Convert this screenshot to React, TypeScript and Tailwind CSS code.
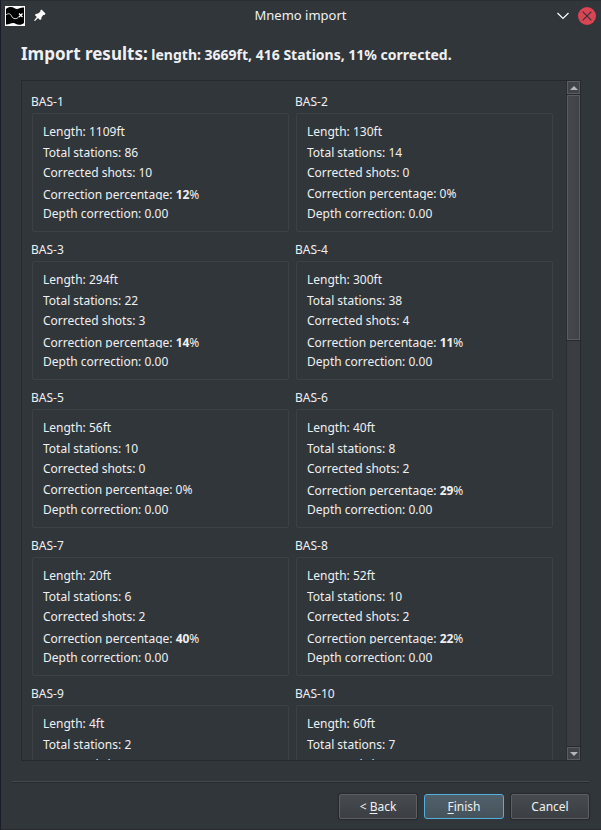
type Survey = {
  name: string;
  length: number;
  stations: number;
  corrected: number;
  percentage: number;
};

const surveys: Survey[] = [
  { name: 'BAS-1', length: 1109, stations: 86, corrected: 10, percentage: 12 },
  { name: 'BAS-2', length: 130, stations: 14, corrected: 0, percentage: 0 },
  { name: 'BAS-3', length: 294, stations: 22, corrected: 3, percentage: 14 },
  { name: 'BAS-4', length: 300, stations: 38, corrected: 4, percentage: 11 },
  { name: 'BAS-5', length: 56, stations: 10, corrected: 0, percentage: 0 },
  { name: 'BAS-6', length: 40, stations: 8, corrected: 2, percentage: 29 },
  { name: 'BAS-7', length: 20, stations: 6, corrected: 2, percentage: 40 },
  { name: 'BAS-8', length: 52, stations: 10, corrected: 2, percentage: 22 },
  { name: 'BAS-9', length: 4, stations: 2, corrected: 0, percentage: 0 },
  { name: 'BAS-10', length: 60, stations: 7, corrected: 0, percentage: 0 },
];

function SurveyGroup({ survey }: { survey: Survey }) {
  const { name, length, stations, corrected, percentage } = survey;
  return (
    <section>
      <h2 className="h-[22px] leading-[22px]">{name}</h2>
      <div className="ml-px grid grid-rows-[21px_20px_20px_21px_20px] rounded-xs border border-[#3d4146] px-2.5 pt-2 pb-[7px] leading-5">
        <p>Length: {length}ft</p>
        <p>Total stations: {stations}</p>
        <p>Corrected shots: {corrected}</p>
        {percentage > 0 ? (
          <p className="h-[17px] overflow-hidden leading-6">
            Correction percentage: <b>{percentage}</b>%
          </p>
        ) : (
          <p className="h-[17px] overflow-hidden leading-[22px]">Correction percentage: 0%</p>
        )}
        <p>Depth correction: 0.00</p>
      </div>
    </section>
  );
}

function TitleBar() {
  return (
    <header className="grid h-[30px] grid-cols-[1fr_auto_1fr] items-center border-t border-[#2a2e32] pr-[5px] pl-1">
      <div className="flex items-center gap-[7px]">
        <svg className="size-5" viewBox="0 0 20 20" aria-hidden="true">
          <rect width="20" height="20" fill="#fcfcfc" />
          <path d="M1 3C4 .5 7 .5 10 2.500C13 4 15 1 19 1.500V17C16 19.500 13 19 10 17.500C7 16 4 19 1 18.500Z" fill="#000" />
          <path d="M1 9C3 7 5.500 7.500 6.500 10C8 13.500 12 13.500 14 10.500" fill="none" stroke="#d8d8d8" strokeWidth="1" />
          <path d="m14 7.500 3.500 3.500m0-3.500L14 11" stroke="#fff" strokeWidth="1.300" />
        </svg>
        <button type="button" aria-label="Keep above others" className="size-4">
          <svg className="size-4" viewBox="0 0 16 16" fill="#fcfcfc" aria-hidden="true">
            <path d="M9.500 1.500 13.500 5.500 12.500 7H11.300L9.500 9.200 9.300 11.300 8 12 6 10 3 13 2 12.500 4.800 9 3 7.200 3.600 5.900 6 5.600 8.300 3.700 8.300 2.600Z" />
          </svg>
        </button>
      </div>
      <h1 className="text-[13px]">Mnemo import</h1>
      <div className="flex items-center justify-end gap-[7px]">
        <button type="button" aria-label="Minimize" className="size-4">
          <svg className="size-4" viewBox="0 0 16 16" fill="none" stroke="#fcfcfc" strokeWidth="1.200" aria-hidden="true">
            <path d="m2.500 5 5.500 5.500L13.500 5" />
          </svg>
        </button>
        <button type="button" aria-label="Close" className="size-[18px]">
          <svg className="size-[18px]" viewBox="0 0 18 18" aria-hidden="true">
            <circle cx="9" cy="9" r="9" fill="#da4453" />
            <path d="m4.700 4.700 8.600 8.600m0-8.600-8.600 8.600" stroke="#31363b" strokeWidth="1.200" />
          </svg>
        </button>
      </div>
    </header>
  );
}

function ScrollBar() {
  return (
    <div className="flex w-[14px] flex-col border-l border-[#2a2d31] bg-[#3a3d41]">
      <button type="button" aria-label="Scroll up" className="flex h-[13px] items-center justify-center border border-[#5a5d61] bg-[#404347]">
        <svg className="h-1 w-2" viewBox="0 0 8 4" fill="#b4b7b9" aria-hidden="true">
          <path d="M0 4 4 0l4 4Z" />
        </svg>
      </button>
      <div className="flex flex-1 flex-col border-y border-[#26292d]">
        <div className="h-[245px] border border-[#5a5d61] bg-linear-to-r from-[#45484c] to-[#3f4246]" />
        <div className="h-px bg-[#26292d]" />
      </div>
      <button type="button" aria-label="Scroll down" className="flex h-[13px] items-center justify-center border border-[#5a5d61] bg-[#404347]">
        <svg className="h-1 w-2" viewBox="0 0 8 4" fill="#b4b7b9" aria-hidden="true">
          <path d="M0 0h8L4 4Z" />
        </svg>
      </button>
    </div>
  );
}

const buttonBase = 'h-[25px] border text-center leading-6';
const plainButton = 'w-[78px] rounded-xs border-[#5c6063] bg-linear-to-b from-[#474b4f] to-[#3b3f43] shadow-[0_0_1px_1px_#26292d]';

export default function App() {
  return (
    <main className="flex h-screen flex-col overflow-hidden border-b border-l border-b-[#26292d] border-l-[#1a1d28] bg-[#31363b] font-['Noto_Sans',sans-serif] text-[12px] text-[#eff0f1]">
      <TitleBar />
      <p className="mt-2.5 ml-5 h-10 text-[14px] leading-7 font-bold">
        <span className="text-[17px]">Import results:</span> length: 3669ft, 416 Stations, 11% corrected.
      </p>
      <div className="mr-5 ml-5 flex min-h-0 flex-1 border border-[#26292d]">
        <div className="flex-1 overflow-y-auto [scrollbar-width:none]">
          <div className="grid grid-cols-2 gap-x-1.5 gap-y-[7px] pt-2.5 pr-[13px] pb-2.5 pl-[9px]">
            {surveys.map((survey) => (
              <SurveyGroup key={survey.name} survey={survey} />
            ))}
          </div>
        </div>
        <ScrollBar />
      </div>
      <hr className="mt-5 mr-3 ml-[11px] h-0.5 border-t border-b border-t-[#46494d] border-b-[#26292d]" />
      <footer className="flex justify-end gap-[7px] pt-[11px] pr-3 pb-2.5">
        <button type="button" className={`${buttonBase} ${plainButton}`}>
          &lt; <u className="underline-offset-2">B</u>ack
        </button>
        <button type="button" className={`w-20 rounded-[3px] ${buttonBase} border-[#55aee0] bg-linear-to-b from-[#50606a] to-[#45535b]`}>
          <u className="underline-offset-2">F</u>inish
        </button>
        <button type="button" className={`${buttonBase} ${plainButton}`}>
          Cancel
        </button>
      </footer>
    </main>
  );
}
